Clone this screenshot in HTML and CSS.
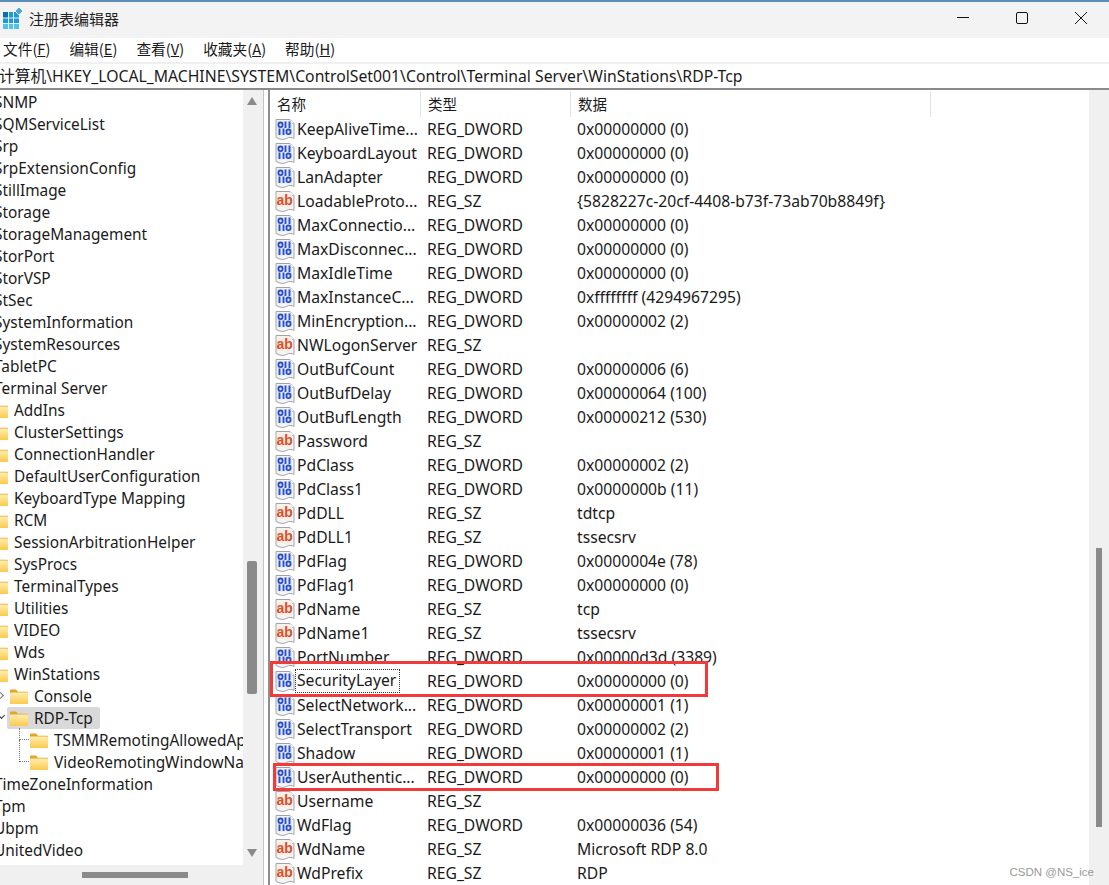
FILE: index.html
```html
<!DOCTYPE html>
<html>
<head>
  <meta charset="UTF-8">
  <title>注册表编辑器</title>
  <link rel="stylesheet" href="styles.css">
</head>
<body>
  <svg class="defs" width="0" height="0">
    <defs>
      <linearGradient id="folderFill" x1="0" y1="0" x2="0" y2="1">
        <stop offset="0" stop-color="#ffeeb0"/>
        <stop offset="1" stop-color="#fbc94e"/>
      </linearGradient>
      <symbol id="folder" viewBox="0 0 18 15">
        <path d="M0 1.500A1 1 0 0 1 1 .5h5l2 2.200h9a1 1 0 0 1 1 1V14a1 1 0 0 1-1 1H1a1 1 0 0 1-1-1z" fill="#e5a526"/>
        <rect x="0" y="3.600" width="18" height="11.400" rx="1" fill="url(#folderFill)"/>
      </symbol>
      <symbol id="page" viewBox="0 0 20 22">
        <path d="M1 1.500h14l4 4v15c-2.500-1.600-5-1.600-7.500 0s-6.500 1-10.500-1z" fill="#f4f5fa" stroke="#a3a3a3"/>
        <path d="M15 1.500v4h4" fill="#fff" stroke="#bdbdbd"/>
      </symbol>
      <symbol id="dword" viewBox="0 0 20 22">
        <use href="#page" width="20" height="22"/>
        <rect x="2" y="3" width="15" height="14.500" fill="#e4e9f8"/>
        <g fill="none" stroke="#2a50c8" stroke-width="1.900">
          <rect x="3.500" y="4.500" width="4" height="4.600" rx="1.800"/>
          <rect x="11.500" y="11.500" width="4" height="4.600" rx="1.800"/>
          <path d="M10.500 3.600v6.400M14.500 3.600v6.400M4.500 10.600v6.400M8.500 10.600v6.400"/>
        </g>
      </symbol>
      <symbol id="sz" viewBox="0 0 20 22">
        <use href="#page" width="20" height="22"/>
        <rect x="2" y="3" width="15" height="14.500" fill="#fdeee8"/>
        <text x="1.500" y="15" class="ab">ab</text>
      </symbol>
    </defs>
  </svg>

  <div class="titlebar">
    <svg class="appicon" width="22" height="22" viewBox="0 0 22 22">
      <rect x="0" y="5" width="16" height="17" fill="#1e9ad8"/>
      <rect x="0" y="5" width="5" height="6" fill="#0f6fae"/>
      <rect x="0" y="17" width="16" height="5" fill="#4fc3ee"/>
      <path d="M5.500 5v17M10.500 5v17M0 11h16M0 16.500h16" stroke="#e4f4fb" stroke-width="1"/>
      <path d="M16 0l4 4-4 4-4-4z" fill="#4ea6d8" stroke="#fff" stroke-width=".8"/>
    </svg>
    <span class="apptitle">注册表编辑器</span>
    <div class="winbtns">
      <svg width="14" height="14" viewBox="0 0 14 14"><path d="M1 6.500h12" stroke="#111" stroke-width="1"/></svg>
      <svg width="14" height="14" viewBox="0 0 14 14"><rect x="1.500" y="1.500" width="11" height="11" rx="1.500" fill="none" stroke="#111" stroke-width="1"/></svg>
      <svg width="14" height="14" viewBox="0 0 14 14"><path d="M1 1l12 12M13 1L1 13" stroke="#111" stroke-width="1"/></svg>
    </div>
  </div>

  <div class="menubar">
    <span>文件(<u>F</u>)</span>
    <span>编辑(<u>E</u>)</span>
    <span>查看(<u>V</u>)</span>
    <span>收藏夹(<u>A</u>)</span>
    <span>帮助(<u>H</u>)</span>
  </div>

  <div class="address">计算机\HKEY_LOCAL_MACHINE\SYSTEM\ControlSet001\Control\Terminal Server\WinStations\RDP-Tcp</div>

  <div class="main">
    <div class="left">
      <div class="tree">
        <div class="node lv0"><svg class="fld"><use href="#folder"/></svg><span>SNMP</span></div>
        <div class="node lv0"><svg class="fld"><use href="#folder"/></svg><span>SQMServiceList</span></div>
        <div class="node lv0"><svg class="fld"><use href="#folder"/></svg><span>Srp</span></div>
        <div class="node lv0"><svg class="fld"><use href="#folder"/></svg><span>SrpExtensionConfig</span></div>
        <div class="node lv0"><svg class="fld"><use href="#folder"/></svg><span>StillImage</span></div>
        <div class="node lv0"><svg class="fld"><use href="#folder"/></svg><span>Storage</span></div>
        <div class="node lv0"><svg class="fld"><use href="#folder"/></svg><span>StorageManagement</span></div>
        <div class="node lv0"><svg class="fld"><use href="#folder"/></svg><span>StorPort</span></div>
        <div class="node lv0"><svg class="fld"><use href="#folder"/></svg><span>StorVSP</span></div>
        <div class="node lv0"><svg class="fld"><use href="#folder"/></svg><span>StSec</span></div>
        <div class="node lv0"><svg class="fld"><use href="#folder"/></svg><span>SystemInformation</span></div>
        <div class="node lv0"><svg class="fld"><use href="#folder"/></svg><span>SystemResources</span></div>
        <div class="node lv0"><svg class="fld"><use href="#folder"/></svg><span>TabletPC</span></div>
        <div class="node lv0"><svg class="fld"><use href="#folder"/></svg><span>Terminal Server</span></div>
        <div class="node lv1"><svg class="fld"><use href="#folder"/></svg><span>AddIns</span></div>
        <div class="node lv1"><svg class="fld"><use href="#folder"/></svg><span>ClusterSettings</span></div>
        <div class="node lv1"><svg class="fld"><use href="#folder"/></svg><span>ConnectionHandler</span></div>
        <div class="node lv1"><svg class="fld"><use href="#folder"/></svg><span>DefaultUserConfiguration</span></div>
        <div class="node lv1"><svg class="fld"><use href="#folder"/></svg><span>KeyboardType Mapping</span></div>
        <div class="node lv1"><svg class="fld"><use href="#folder"/></svg><span>RCM</span></div>
        <div class="node lv1"><svg class="fld"><use href="#folder"/></svg><span>SessionArbitrationHelper</span></div>
        <div class="node lv1"><svg class="fld"><use href="#folder"/></svg><span>SysProcs</span></div>
        <div class="node lv1"><svg class="fld"><use href="#folder"/></svg><span>TerminalTypes</span></div>
        <div class="node lv1"><svg class="fld"><use href="#folder"/></svg><span>Utilities</span></div>
        <div class="node lv1"><svg class="fld"><use href="#folder"/></svg><span>VIDEO</span></div>
        <div class="node lv1"><svg class="fld"><use href="#folder"/></svg><span>Wds</span></div>
        <div class="node lv1"><svg class="fld"><use href="#folder"/></svg><span>WinStations</span></div>
        <div class="node lv2"><i class="caret closed"></i><svg class="fld"><use href="#folder"/></svg><span>Console</span></div>
        <div class="node lv2 sel"><i class="caret open"></i><svg class="fld"><use href="#folder"/></svg><span>RDP-Tcp</span></div>
        <div class="node lv3"><i class="dots first"></i><svg class="fld"><use href="#folder"/></svg><span>TSMMRemotingAllowedApps</span></div>
        <div class="node lv3"><i class="dots"></i><svg class="fld"><use href="#folder"/></svg><span>VideoRemotingWindowNames</span></div>
        <div class="node lv0"><svg class="fld"><use href="#folder"/></svg><span>TimeZoneInformation</span></div>
        <div class="node lv0"><svg class="fld"><use href="#folder"/></svg><span>Tpm</span></div>
        <div class="node lv0"><svg class="fld"><use href="#folder"/></svg><span>Ubpm</span></div>
        <div class="node lv0"><svg class="fld"><use href="#folder"/></svg><span>UnitedVideo</span></div>
      </div>
      <div class="vbar">
        <i class="arrow up"></i>
        <i class="thumb"></i>
        <i class="arrow down"></i>
      </div>
      <div class="hbar"><i class="hthumb"></i></div>
      <div class="corner"></div>
    </div>

    <div class="right">
      <div class="list">
        <div class="head">
          <div class="hcell">名称</div>
          <div class="hcell">类型</div>
          <div class="hcell wide">数据</div>
        </div>
        <div class="row"><div class="name"><svg class="ico"><use href="#dword"/></svg>KeepAliveTime...</div><div>REG_DWORD</div><div>0x00000000 (0)</div></div>
        <div class="row"><div class="name"><svg class="ico"><use href="#dword"/></svg>KeyboardLayout</div><div>REG_DWORD</div><div>0x00000000 (0)</div></div>
        <div class="row"><div class="name"><svg class="ico"><use href="#dword"/></svg>LanAdapter</div><div>REG_DWORD</div><div>0x00000000 (0)</div></div>
        <div class="row"><div class="name"><svg class="ico"><use href="#sz"/></svg>LoadableProto...</div><div>REG_SZ</div><div>{5828227c-20cf-4408-b73f-73ab70b8849f}</div></div>
        <div class="row"><div class="name"><svg class="ico"><use href="#dword"/></svg>MaxConnectio...</div><div>REG_DWORD</div><div>0x00000000 (0)</div></div>
        <div class="row"><div class="name"><svg class="ico"><use href="#dword"/></svg>MaxDisconnec...</div><div>REG_DWORD</div><div>0x00000000 (0)</div></div>
        <div class="row"><div class="name"><svg class="ico"><use href="#dword"/></svg>MaxIdleTime</div><div>REG_DWORD</div><div>0x00000000 (0)</div></div>
        <div class="row"><div class="name"><svg class="ico"><use href="#dword"/></svg>MaxInstanceC...</div><div>REG_DWORD</div><div>0xffffffff (4294967295)</div></div>
        <div class="row"><div class="name"><svg class="ico"><use href="#dword"/></svg>MinEncryption...</div><div>REG_DWORD</div><div>0x00000002 (2)</div></div>
        <div class="row"><div class="name"><svg class="ico"><use href="#sz"/></svg>NWLogonServer</div><div>REG_SZ</div><div></div></div>
        <div class="row"><div class="name"><svg class="ico"><use href="#dword"/></svg>OutBufCount</div><div>REG_DWORD</div><div>0x00000006 (6)</div></div>
        <div class="row"><div class="name"><svg class="ico"><use href="#dword"/></svg>OutBufDelay</div><div>REG_DWORD</div><div>0x00000064 (100)</div></div>
        <div class="row"><div class="name"><svg class="ico"><use href="#dword"/></svg>OutBufLength</div><div>REG_DWORD</div><div>0x00000212 (530)</div></div>
        <div class="row"><div class="name"><svg class="ico"><use href="#sz"/></svg>Password</div><div>REG_SZ</div><div></div></div>
        <div class="row"><div class="name"><svg class="ico"><use href="#dword"/></svg>PdClass</div><div>REG_DWORD</div><div>0x00000002 (2)</div></div>
        <div class="row"><div class="name"><svg class="ico"><use href="#dword"/></svg>PdClass1</div><div>REG_DWORD</div><div>0x0000000b (11)</div></div>
        <div class="row"><div class="name"><svg class="ico"><use href="#sz"/></svg>PdDLL</div><div>REG_SZ</div><div>tdtcp</div></div>
        <div class="row"><div class="name"><svg class="ico"><use href="#sz"/></svg>PdDLL1</div><div>REG_SZ</div><div>tssecsrv</div></div>
        <div class="row"><div class="name"><svg class="ico"><use href="#dword"/></svg>PdFlag</div><div>REG_DWORD</div><div>0x0000004e (78)</div></div>
        <div class="row"><div class="name"><svg class="ico"><use href="#dword"/></svg>PdFlag1</div><div>REG_DWORD</div><div>0x00000000 (0)</div></div>
        <div class="row"><div class="name"><svg class="ico"><use href="#sz"/></svg>PdName</div><div>REG_SZ</div><div>tcp</div></div>
        <div class="row"><div class="name"><svg class="ico"><use href="#sz"/></svg>PdName1</div><div>REG_SZ</div><div>tssecsrv</div></div>
        <div class="row"><div class="name"><svg class="ico"><use href="#dword"/></svg>PortNumber</div><div>REG_DWORD</div><div>0x00000d3d (3389)</div></div>
        <div class="row"><div class="name"><svg class="ico"><use href="#dword"/></svg><span class="focus">SecurityLayer</span></div><div>REG_DWORD</div><div>0x00000000 (0)</div></div>
        <div class="row"><div class="name"><svg class="ico"><use href="#dword"/></svg>SelectNetwork...</div><div>REG_DWORD</div><div>0x00000001 (1)</div></div>
        <div class="row"><div class="name"><svg class="ico"><use href="#dword"/></svg>SelectTransport</div><div>REG_DWORD</div><div>0x00000002 (2)</div></div>
        <div class="row"><div class="name"><svg class="ico"><use href="#dword"/></svg>Shadow</div><div>REG_DWORD</div><div>0x00000001 (1)</div></div>
        <div class="row"><div class="name"><svg class="ico"><use href="#dword"/></svg>UserAuthentic...</div><div>REG_DWORD</div><div>0x00000000 (0)</div></div>
        <div class="row"><div class="name"><svg class="ico"><use href="#sz"/></svg>Username</div><div>REG_SZ</div><div></div></div>
        <div class="row"><div class="name"><svg class="ico"><use href="#dword"/></svg>WdFlag</div><div>REG_DWORD</div><div>0x00000036 (54)</div></div>
        <div class="row"><div class="name"><svg class="ico"><use href="#sz"/></svg>WdName</div><div>REG_SZ</div><div>Microsoft RDP 8.0</div></div>
        <div class="row"><div class="name"><svg class="ico"><use href="#sz"/></svg>WdPrefix</div><div>REG_SZ</div><div>RDP</div></div>
      </div>
      <div class="rbar"><i class="rthumb"></i></div>
      <div class="mark one"></div>
      <div class="mark two"></div>
      <div class="watermark">CSDN @NS_ice</div>
    </div>
  </div>
</body>
</html>
```

FILE: styles.css
```css
* {padding: 0; margin: 0; box-sizing: border-box;}

html, body {
  width: 1109px;
  height: 885px;
  overflow: hidden;
  background: #fff;
  color: #1a1a1a;
  font-family: "Noto Sans", "Noto Sans CJK SC", sans-serif;
  font-size: 15.7px;
}
body {
  display: flex;
  flex-direction: column;
}
.defs {
  position: absolute;
}
.ab {
  font-family: "Liberation Sans", sans-serif;
  font-size: 14px;
  font-weight: bold;
  fill: #dc4f2a;
}

/* title */
.titlebar {
  height: 38px;
  display: flex;
  align-items: center;
  padding: 0 0 4px 3px;
  background: #f3f3f3;
  border-top: 2px solid #5b8db5;
}
.appicon {
  margin-right: 4px;
}
.apptitle {
  font-family: "Noto Sans CJK SC", sans-serif;
  font-size: 15px;
  color: #222;
}
.winbtns {
  margin-left: auto;
  display: flex;
  gap: 45px;
  padding-right: 21px;
}

/* menu */
.menubar {
  height: 26px;
  display: flex;
  align-items: center;
  gap: 19px;
  padding: 0 0 3px 3px;
  border-bottom: 2px solid #f0f0f0;
  font-family: "Noto Sans CJK SC", sans-serif;
  font-size: 14.7px;
}
.address {
  height: 26px;
  line-height: 24px;
  font-size: 15.75px;
  white-space: nowrap;
  text-indent: -1px;
  border-bottom: 2px solid #8a8a8a;
}

.main {
  height: 795px;
  display: flex;
}

/* left pane */
.left {
  width: 264px;
  display: grid;
  grid-template-columns: 243px 20px;
  grid-template-rows: 775px 20px;
  border-right: 1px solid #c4c4c4;
  background: #f0f0f0;
}
.tree {
  background: #fff;
  overflow: hidden;
  padding-top: 1px;
  font-size: 15.4px;
}
.node {
  height: 22px;
  line-height: 20px;
  display: flex;
  align-items: center;
  gap: 6px;
  width: max-content;
  position: relative;
  white-space: nowrap;
}
.node span {
  padding-top: 2px;
}
.lv0 {margin-left: -30px;}
.lv1 {margin-left: -10px;}
.lv2 {margin-left: 10px;}
.lv3 {margin-left: 30px;}
.fld {
  width: 18px;
  height: 15px;
}
.sel::before {
  content: "";
  position: absolute;
  z-index: -1;
  left: -3px;
  right: -7px;
  top: 0;
  bottom: 0;
  border-radius: 2px;
  background: #d9d9d9;
}
.sel {
  z-index: 0;
}
.caret {
  position: absolute;
  left: -12px;
  top: 8px;
  width: 5px;
  height: 5px;
  border-right: 1.5px solid #777;
  border-bottom: 1.5px solid #777;
}
.caret.closed {
  transform: rotate(-45deg);
}
.caret.open {
  left: -11px;
  top: 6px;
  border-color: #333;
  transform: rotate(45deg);
}
.dots {
  position: absolute;
  left: -11px;
  top: 11px;
  width: 10px;
  height: 22px;
  border-left: 1px dotted #777;
  border-bottom: 1px dotted #777;
  transform: translateY(-22px);
}
.dots.first {
  top: 11px;
  height: 12px;
  transform: translateY(-12px);
}
.vbar {
  display: flex;
  flex-direction: column;
  align-items: center;
  padding-right: 2px;
}
.arrow {
  width: 0;
  height: 0;
  border-left: 5px solid transparent;
  border-right: 5px solid transparent;
}
.arrow.up {
  margin-top: 7px;
  border-bottom: 8px solid #8a8a8a;
}
.arrow.down {
  margin-top: 155px;
  border-top: 8px solid #8a8a8a;
}
.thumb {
  width: 10px;
  height: 133px;
  margin-top: 456px;
  border-radius: 2px;
  background: #8a8a8a;
}
.hbar {
  padding: 7px 0 0 82px;
}
.hthumb {
  display: block;
  width: 106px;
  height: 6px;
  background: #8a8a8a;
}

/* right pane */
.right {
  flex: 1;
  display: flex;
  position: relative;
  margin-left: 4px;
  border-left: 2px solid #8e8e8e;
}
.list {
  flex: 1;
  padding-top: 1px;
  overflow: hidden;
}
.head {
  height: 26px;
  display: flex;
}
.hcell {
  width: 150px;
  padding-left: 7px;
  line-height: 26px;
  font-family: "Noto Sans CJK SC", sans-serif;
  font-size: 14.5px;
  border-right: 1px solid #e3e3e3;
}
.hcell:first-child {
  width: 151px;
}
.hcell.wide {
  width: 360px;
}
.row {
  height: 24px;
  line-height: 22px;
  display: grid;
  grid-template-columns: 157px 150px 1fr;
  align-items: center;
  white-space: nowrap;
}
.name {
  display: flex;
  align-items: center;
  gap: 2px;
  padding-left: 5px;
}
.ico {
  width: 20px;
  height: 22px;
}
.focus {
  width: 105px;
  height: 24px;
  line-height: 21px;
  margin-left: -2px;
  padding-left: 1px;
  border: 1px dotted #333;
}
.rbar {
  width: 20px;
  background: #f0f0f0;
  padding: 458px 0 0 7px;
}
.rthumb {
  display: block;
  width: 6px;
  height: 279px;
  background: #8a8a8a;
}

/* annotations on top of the list */
.mark {
  position: absolute;
  border: 3px solid #f33a3a;
}
.mark.one {
  left: 0;
  top: 571px;
  width: 438px;
  height: 36px;
}
.mark.two {
  left: 3px;
  top: 673px;
  width: 446px;
  height: 28px;
}
.watermark {
  position: absolute;
  right: 15px;
  bottom: 7px;
  font-family: "Liberation Sans", sans-serif;
  font-size: 11.5px;
  color: #999;
}
```
